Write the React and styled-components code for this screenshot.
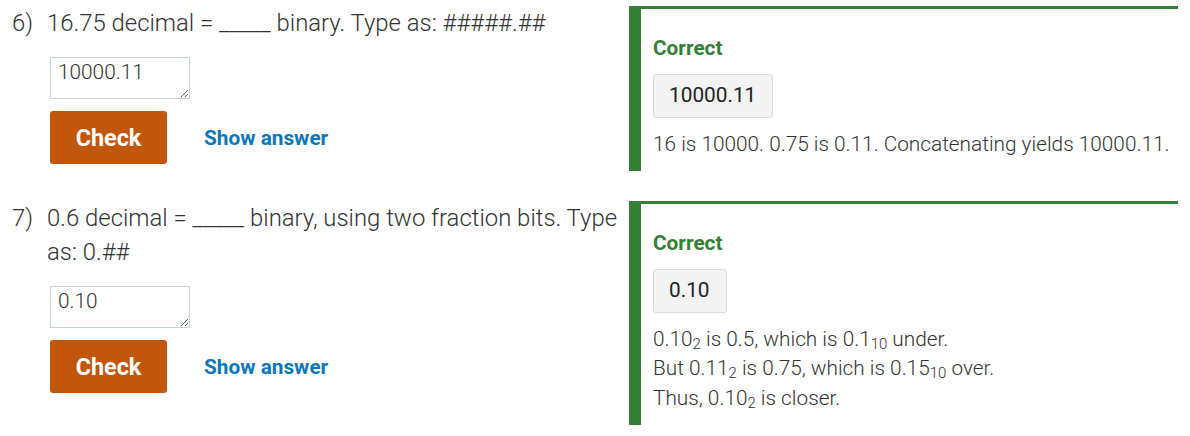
import React from "react";
import styled, { createGlobalStyle } from "styled-components";

const GlobalStyle = createGlobalStyle`
  html, body { margin: 0; padding: 0; background: #ffffff; }
  body {
    font-family: Roboto, "Noto Sans", "Liberation Sans", sans-serif;
    color: #333333;
  }
`;

const Page = styled.div`
  padding: 6px 0 0 12px;
`;

const Row = styled.section`
  display: flex;
  align-items: flex-start;
  margin-bottom: 30px;
`;

const QuestionCol = styled.div`
  display: flex;
  width: 617px;
  flex: 0 0 617px;
`;

const Number = styled.div`
  width: 35px;
  flex: 0 0 35px;
  font-size: 23.9px;
  font-weight: 300;
  line-height: 34px;
  color: #333;
`;

const QuestionBody = styled.div`
  flex: 1;
  min-width: 0;
`;

const Prompt = styled.div`
  font-size: 23.9px;
  font-weight: 300;
  line-height: 34px;
  color: #333;
`;

const AnswerInput = styled.textarea`
  display: block;
  box-sizing: border-box;
  width: 140px;
  height: 42px;
  margin: 17px 0 0 3px;
  padding: 1px 7px;
  border: 1px solid #c9d5dc;
  border-radius: 0;
  font-family: Roboto, "Noto Sans", sans-serif;
  font-size: 20.8px;
  font-weight: 300;
  line-height: 26px;
  color: #333;
  background: #fff;
  outline: none;
  overflow: hidden;
`;

const Actions = styled.div`
  display: flex;
  align-items: center;
  gap: 37px;
  margin: 12px 0 0 3px;
`;

const CheckButton = styled.button`
  box-sizing: border-box;
  height: 53px;
  width: 117px;
  padding: 0;
  border: none;
  border-radius: 3px;
  background: #c2560b;
  color: #ffffff;
  font-family: Roboto, "Noto Sans", sans-serif;
  font-size: 23.4px;
  font-weight: 700;
  cursor: pointer;
`;

const ShowAnswer = styled.a`
  font-size: 20.8px;
  font-weight: 700;
  color: #0c77b9;
  text-decoration: none;
  cursor: pointer;
`;

const FeedbackPanel = styled.div`
  box-sizing: border-box;
  width: 549px;
  flex: 0 0 549px;
  border-left: 12px solid #358035;
  border-top: 3px solid #358035;
  padding: 25px 0 12px 12px;
  font-size: 20.8px;
  line-height: 29.5px;
`;

const Heading = styled.div`
  font-weight: 700;
  color: #358035;
`;

const AnswerBox = styled.div`
  display: inline-block;
  margin-top: 10.5px;
  padding: 6px 16px 6px 15px;
  background: #f3f3f3;
  border: 1px solid #dcdcdc;
  border-radius: 3px;
  font-weight: 400;
  color: #222;
`;

const Explanation = styled.div`
  margin-top: 12px;
  font-weight: 300;
  color: #333;
  white-space: nowrap;
`;

const Sub = styled.sub`
  font-size: 0.72em;
  line-height: 0;
  vertical-align: -0.22em;
`;

const questions = [
  {
    num: "6)",
    prompt: "16.75 decimal = _____ binary. Type as: #####.##",
    value: "10000.11",
    answer: "10000.11",
    explanation: [["16 is 10000. 0.75 is 0.11. Concatenating yields 10000.11."]],
  },
  {
    num: "7)",
    prompt: "0.6 decimal = _____ binary, using two fraction bits. Type as: 0.##",
    value: "0.10",
    answer: "0.10",
    explanation: [
      ["0.10", { sub: "2" }, " is 0.5, which is 0.1", { sub: "10" }, " under."],
      ["But 0.11", { sub: "2" }, " is 0.75, which is 0.15", { sub: "10" }, " over."],
      ["Thus, 0.10", { sub: "2" }, " is closer."],
    ],
  },
];

function Line({ parts }) {
  return (
    <div>
      {parts.map((p, i) =>
        typeof p === "string" ? <React.Fragment key={i}>{p}</React.Fragment> : <Sub key={i}>{p.sub}</Sub>
      )}
    </div>
  );
}

export default function App() {
  return (
    <>
      <GlobalStyle />
      <Page>
        {questions.map((q) => (
          <Row key={q.num}>
            <QuestionCol>
              <Number>{q.num}</Number>
              <QuestionBody>
                <Prompt>{q.prompt}</Prompt>
                <AnswerInput defaultValue={q.value} />
                <Actions>
                  <CheckButton>Check</CheckButton>
                  <ShowAnswer>Show answer</ShowAnswer>
                </Actions>
              </QuestionBody>
            </QuestionCol>
            <FeedbackPanel>
              <Heading>Correct</Heading>
              <AnswerBox>{q.answer}</AnswerBox>
              <Explanation>
                {q.explanation.map((parts, i) => (
                  <Line key={i} parts={parts} />
                ))}
              </Explanation>
            </FeedbackPanel>
          </Row>
        ))}
      </Page>
    </>
  );
}
